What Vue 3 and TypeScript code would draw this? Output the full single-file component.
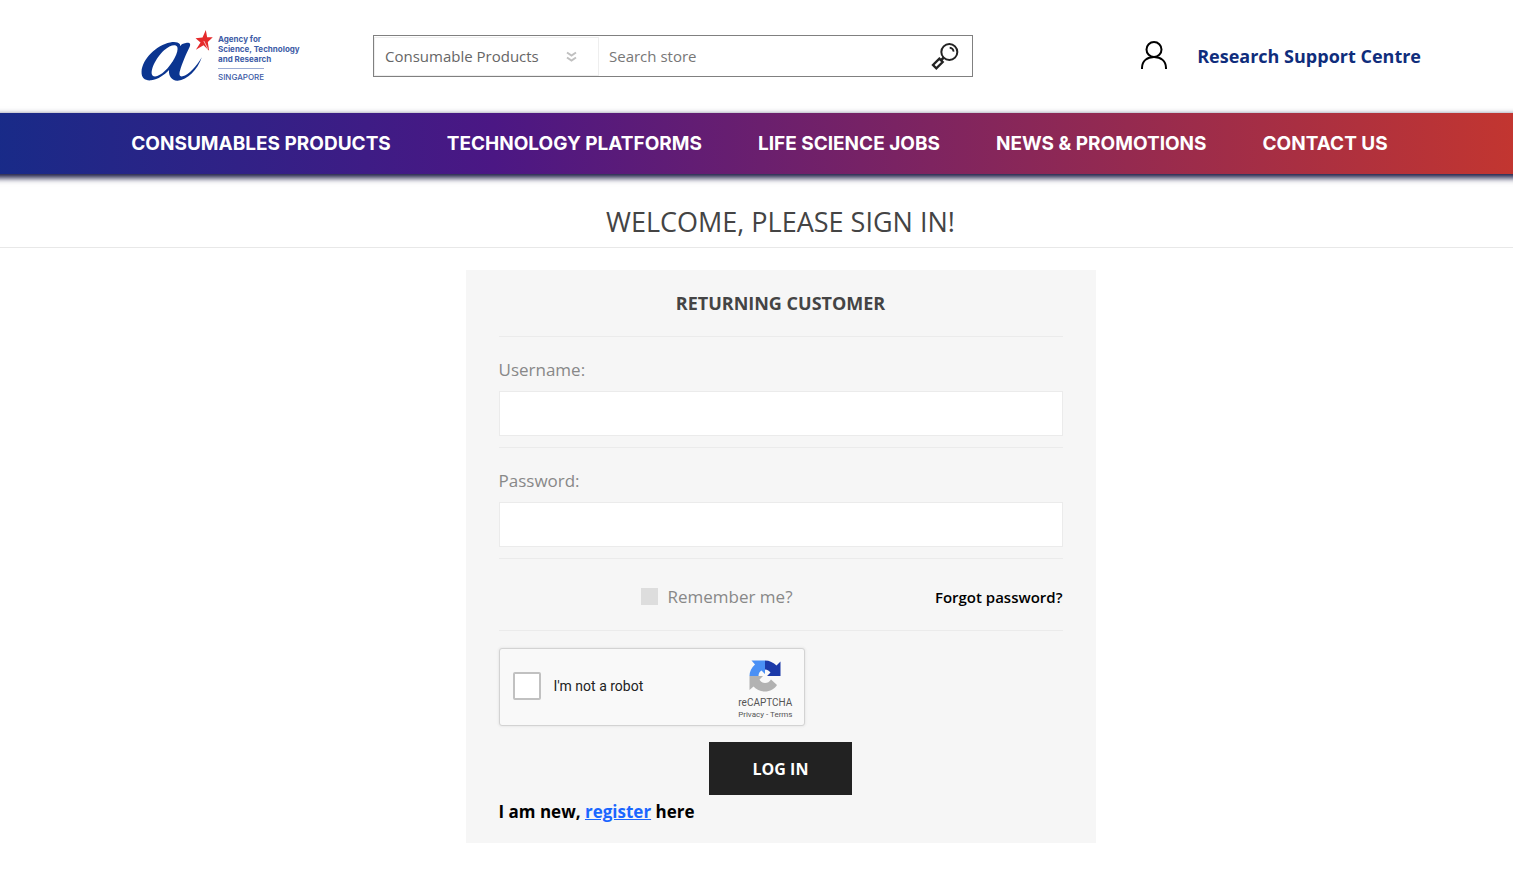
<script setup lang="ts">
import { ref } from 'vue'

const navItems: string[] = [
  'CONSUMABLES PRODUCTS',
  'TECHNOLOGY PLATFORMS',
  'LIFE SCIENCE JOBS',
  'NEWS & PROMOTIONS',
  'CONTACT US',
]

const category = ref('Consumable Products')
const query = ref('')
const username = ref('')
const password = ref('')
const remember = ref(false)
const robot = ref(false)
</script>

<template>
  <div class="page">
    <header class="header">
      <a class="logo" href="#" aria-label="Agency for Science, Technology and Research Singapore">
        <svg class="mark" viewBox="33 24 216 160" aria-hidden="true">
          <path
            fill="#0b3590"
            fill-rule="evenodd"
            d="M150 70 C144 64 134 62 120 65 C80 72 36 115 34 153 C33 171 45 181 63 179 C84 177 104 162 117 148 C115 167 126 181 143 180 C172 178 203 147 216 109 C200 135 177 162 158 167 C148 169 147 160 150 150 C156 129 169 98 179 78 C184 67 178 64 168 66 C159 67 154 70 150 76 Z M142 78 C147 92 128 128 104 151 C91 164 74 172 67 164 C58 152 76 112 102 88 C119 73 137 68 142 78 Z"
          />
          <path
            fill="#e52a2b"
            d="M228 27 L232 49 L249 49 L234 63 L238 90 L221 73 L198 87 L212 65 L197 52 L218 50 Z"
          />
          <path fill="none" stroke="#ffffff" stroke-width="2" d="M222 60 L234 84" />
        </svg>
        <span class="logo-text">
          <span>Agency for</span>
          <span>Science, Technology</span>
          <span>and Research</span>
          <span class="country">SINGAPORE</span>
        </span>
      </a>

      <form class="search" role="search" @submit.prevent>
        <div class="category">
          <select v-model="category" aria-label="Category">
            <option>Consumable Products</option>
            <option>Technology Platforms</option>
          </select>
          <svg class="chevrons" viewBox="0 0 11 11" aria-hidden="true">
            <path d="M1 1.500 L5.500 4.500 L10 1.500 M1 6.500 L5.500 9.500 L10 6.500" />
          </svg>
        </div>
        <input v-model="query" type="text" placeholder="Search store" aria-label="Search store" />
        <button class="search-button" type="submit" aria-label="Search">
          <svg viewBox="0 0 84 84" aria-hidden="true">
            <g fill="none" stroke="#222222" stroke-width="6">
              <circle cx="55" cy="30" r="24" />
              <path d="M38 47 L30 55" stroke-width="8" />
              <path d="M25 50 L35 60 L16 79 L6 69 Z" stroke-width="7" />
              <path d="M56 17 C63 18 67 22 68 29" stroke-width="5" />
            </g>
          </svg>
        </button>
      </form>

      <div class="account">
        <a href="#" aria-label="My account">
          <svg class="user" viewBox="0 0 26 29" aria-hidden="true">
            <circle cx="13" cy="8.500" r="7.500" />
            <path d="M1 28 V27 C1 20 6 16 13 16 C20 16 25 20 25 27 V28" />
          </svg>
        </a>
        <a class="centre" href="#">Research Support Centre</a>
      </div>
    </header>

    <nav class="nav" aria-label="Main">
      <a v-for="item in navItems" :key="item" href="#">{{ item }}</a>
    </nav>

    <main>
      <h1>WELCOME, PLEASE SIGN IN!</h1>

      <div class="content">
        <form class="card" @submit.prevent>
          <h2>RETURNING CUSTOMER</h2>

          <div class="field">
            <label for="username">Username:</label>
            <input id="username" v-model="username" type="text" />
          </div>
          <div class="field">
            <label for="password">Password:</label>
            <input id="password" v-model="password" type="password" />
          </div>

          <div class="options">
            <label class="remember">
              <input v-model="remember" type="checkbox" />
              <span>Remember me?</span>
            </label>
            <a class="forgot" href="#">Forgot password?</a>
          </div>

          <div class="captcha">
            <label class="robot">
              <input v-model="robot" type="checkbox" />
              <span>I'm not a robot</span>
            </label>
            <div class="brand">
              <svg viewBox="0 0 64 64" aria-hidden="true">
                <path fill="#1c3aa9" d="M63 32 V3 L55 11 C49 5 41 1 32 1 V19 C37 19 41 22 43 25 L36 32 Z" />
                <path fill="#4a90f5" d="M32 1 H5 L12 9 C5 15 1 23 1 32 H19 C19 27 21 23 25 21 L32 28 Z" />
                <path fill="#b2b2b2" d="M1 32 V60 L9 53 C15 60 23 63 32 63 C42 63 51 58 56 50 L44 39 C41 44 37 46 32 46 C27 46 23 43 21 39 L28 32 Z" />
              </svg>
              <span class="brand-name">reCAPTCHA</span>
              <span class="legal"><a href="#">Privacy</a> - <a href="#">Terms</a></span>
            </div>
          </div>

          <button class="login" type="submit">LOG IN</button>
          <p class="register">I am new, <a href="#">register</a> here</p>
        </form>
      </div>
    </main>
  </div>
</template>

<style>
body {
  margin: 0;
  background: #ffffff;
}
</style>

<style scoped>
.page,
.page * {
  box-sizing: border-box;
}

.page {
  overflow-x: clip;
  font-family: "Open Sans", "Noto Sans", sans-serif;
  color: #444444;
}

a {
  color: inherit;
  text-decoration: none;
}

input,
select,
button {
  margin: 0;
  font-family: inherit;
  border-radius: 0;
}

svg {
  display: block;
}

.header {
  display: flex;
  align-items: center;
  height: 113px;
  padding: 0 92px 2px 141px;
}

.logo {
  display: flex;
  gap: 5px;
  width: 232px;
}

.mark {
  width: 72px;
  height: 53px;
}

.logo-text {
  display: flex;
  flex-direction: column;
  align-items: flex-start;
  padding-top: 5px;
  font: 700 8px/10px Inter, sans-serif;
  color: #3d5ba6;
  white-space: nowrap;
}

.country {
  margin-top: 4px;
  padding-top: 3px;
  border-top: 1px solid #9dacd3;
  font-weight: 500;
}

.search {
  display: flex;
  flex: 0 1 600px;
  height: 42px;
  border: 1px solid #808080;
}

.category {
  position: relative;
  width: 225px;
  padding-top: 1px;
}

.category select {
  width: 100%;
  height: 100%;
  padding: 0 40px 0 10px;
  appearance: none;
  border: 1px solid #eeeeee;
  background: #ffffff;
  color: #666666;
  font-size: 15px;
}

.chevrons {
  position: absolute;
  top: 15px;
  right: 22px;
  width: 11px;
  height: 11px;
  fill: none;
  stroke: #c0c0c0;
  stroke-width: 2;
  pointer-events: none;
}

.search > input {
  flex: 1;
  min-width: 0;
  padding: 0 10px;
  border: 0;
  background: transparent;
  color: #777777;
  font-size: 15px;
}

.search > input::placeholder {
  color: #777777;
}

.search-button {
  display: grid;
  place-items: center;
  width: 54px;
  padding: 0;
  border: 0;
  background: transparent;
}

.search-button svg {
  width: 28px;
  height: 28px;
}

.account {
  display: flex;
  align-items: center;
  gap: 30px;
  margin-left: auto;
}

.user {
  width: 26px;
  height: 29px;
  fill: none;
  stroke: #000000;
  stroke-width: 2;
}

.centre {
  color: #0f2d7c;
  font-size: 18px;
  font-weight: 700;
  white-space: nowrap;
}

.nav {
  display: flex;
  justify-content: center;
  gap: 56px;
  margin: 0 -16px;
  padding: 0 0 0 6px;
  background: linear-gradient(90deg, #172b88 0%, #4b1784 33%, #c4362f 100%);
  box-shadow: 0 3px 6px 1px #1b1b45;
}

.nav a {
  color: #ffffff;
  font: 700 19px/61px Inter, sans-serif;
  white-space: nowrap;
}

h1 {
  margin: 0;
  padding: 27px 0 5px 48px;
  border-bottom: 1px solid #e8e8e8;
  font-size: 27px;
  font-weight: 400;
  line-height: 41px;
  text-align: center;
}

.content {
  padding: 22px 0 36px 48px;
}

.card {
  display: flex;
  flex-direction: column;
  max-width: 630px;
  margin: 0 auto;
  padding: 0 33px 19px;
  background: #f6f6f6;
}

h2 {
  margin: 0;
  border-bottom: 1px solid #ebebeb;
  font-size: 18px;
  font-weight: 700;
  line-height: 66px;
  text-align: center;
}

.field {
  display: flex;
  flex-direction: column;
  padding: 20px 0 11px;
  border-bottom: 1px solid #ebebeb;
  color: #888888;
  font-size: 17px;
}

.field label {
  margin-bottom: 8px;
  line-height: 26px;
}

.field input {
  height: 45px;
  padding: 0 12px;
  border: 1px solid #ebebeb;
  background: #ffffff;
  font-size: 17px;
}

.options {
  display: grid;
  grid-template-columns: 1fr auto 1fr;
  align-items: center;
  height: 72px;
  padding-top: 4px;
  border-bottom: 1px solid #ebebeb;
}

.remember {
  display: flex;
  grid-column: 2;
  align-items: center;
  gap: 10px;
  margin-right: 128px;
  color: #888888;
  font-size: 17px;
}

.remember input {
  width: 17px;
  height: 17px;
  appearance: none;
  background: #dddddd;
}

.forgot {
  justify-self: end;
  color: #000000;
  font-size: 15px;
  font-weight: 600;
}

.captcha {
  display: flex;
  align-items: center;
  justify-content: space-between;
  width: 306px;
  height: 78px;
  margin-top: 17px;
  padding: 0 11px 0 13px;
  border: 1px solid #d3d3d3;
  border-radius: 3px;
  background: #f9f9f9;
  box-shadow: 0 0 3px #dddddd;
  font-family: Roboto, sans-serif;
}

.robot {
  display: flex;
  align-items: center;
  gap: 13px;
  padding-bottom: 2px;
  color: #222222;
  font-size: 14px;
}

.robot input {
  width: 28px;
  height: 28px;
  appearance: none;
  border: 2px solid #c1c1c1;
  border-radius: 2px;
  background: #ffffff;
}

.brand {
  display: flex;
  flex-direction: column;
  align-items: center;
  padding-top: 5px;
  color: #555555;
}

.brand svg {
  width: 32px;
  height: 32px;
}

.brand-name {
  margin-top: 4px;
  font-size: 10px;
  line-height: 14px;
}

.legal {
  font-size: 8px;
  line-height: 10px;
}

.login {
  align-self: center;
  width: 143px;
  height: 53px;
  margin-top: 16px;
  border: 0;
  background: #222222;
  color: #ffffff;
  font-size: 16px;
  font-weight: 700;
}

.register {
  margin: 4px 0 0;
  color: #000000;
  font-size: 17px;
  font-weight: 700;
  line-height: 25px;
}

.register a {
  color: #1a66ff;
  text-decoration: underline;
}
</style>
